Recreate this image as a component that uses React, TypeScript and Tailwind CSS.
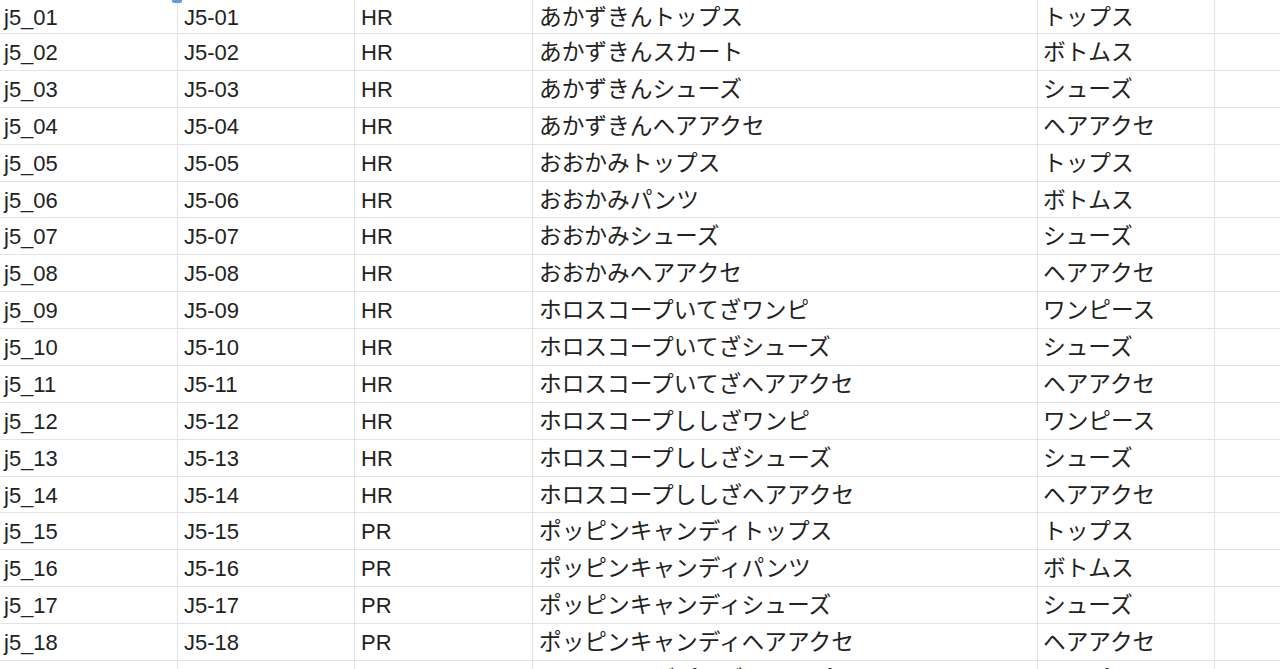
import React from "react";

type Row = { a: string; b: string; c: string; d: string; e: string; h: string };

const names: [string, string][] = [
  ["あかずきんトップス", "トップス"],
  ["あかずきんスカート", "ボトムス"],
  ["あかずきんシューズ", "シューズ"],
  ["あかずきんヘアアクセ", "ヘアアクセ"],
  ["おおかみトップス", "トップス"],
  ["おおかみパンツ", "ボトムス"],
  ["おおかみシューズ", "シューズ"],
  ["おおかみヘアアクセ", "ヘアアクセ"],
  ["ホロスコープいてざワンピ", "ワンピース"],
  ["ホロスコープいてざシューズ", "シューズ"],
  ["ホロスコープいてざヘアアクセ", "ヘアアクセ"],
  ["ホロスコープししざワンピ", "ワンピース"],
  ["ホロスコープししざシューズ", "シューズ"],
  ["ホロスコープししざヘアアクセ", "ヘアアクセ"],
  ["ポッピンキャンディトップス", "トップス"],
  ["ポッピンキャンディパンツ", "ボトムス"],
  ["ポッピンキャンディシューズ", "シューズ"],
  ["ポッピンキャンディヘアアクセ", "ヘアアクセ"],
  ["ドリーミングプリズムワンピース", "ワンピース"],
];

const heights = [
  "h-[34px]",
  "h-[37px]",
  "h-[37px]",
  "h-[37px]",
  "h-[37px]",
  "h-[36px]",
  "h-[37px]",
  "h-[37px]",
  "h-[37px]",
  "h-[37px]",
  "h-[37px]",
  "h-[37px]",
  "h-[37px]",
  "h-[36px]",
  "h-[37px]",
  "h-[37px]",
  "h-[37px]",
  "h-[37px]",
  "h-[37px]",
];

const rows: Row[] = names.map(([d, e], i) => {
  const n = String(i + 1).padStart(2, "0");
  const last = i === names.length - 1;
  return {
    a: last ? "" : `j5_${n}`,
    b: last ? "" : `J5-${n}`,
    c: last ? "" : i < 14 ? "HR" : "PR",
    d,
    e,
    h: heights[i],
  };
});

export default function App() {
  return (
    <div className="relative w-[1280px] h-[669px] overflow-hidden bg-white text-[#222] font-['Liberation_Sans','Noto_Sans_CJK_JP',sans-serif] text-[22px] leading-none">
      <div className="flex flex-col">
        {rows.map((r, i) => (
          <div
            key={i}
            className={`grid grid-cols-[178px_177px_178px_505px_177px_1fr] shrink-0 border-b border-[#e2e2e2] ${r.h}`}
          >
            <div className="flex items-center border-r border-[#e2e2e2] pl-[4px] pt-[2px] whitespace-nowrap">{r.a}</div>
            <div className="flex items-center border-r border-[#e2e2e2] pl-[6px] pt-[2px] whitespace-nowrap">{r.b}</div>
            <div className="flex items-center border-r border-[#e2e2e2] pl-[6px] pt-[2px] whitespace-nowrap">{r.c}</div>
            <div className="flex items-center border-r border-[#e2e2e2] pl-[6px] pb-[1px] whitespace-nowrap font-['Noto_Sans_CJK_JP',sans-serif] text-[22.7px]">{r.d}</div>
            <div className="flex items-center border-r border-[#e2e2e2] pl-[5px] pb-[1px] whitespace-nowrap font-['Noto_Sans_CJK_JP',sans-serif] text-[22.7px]">{r.e}</div>
            <div />
          </div>
        ))}
      </div>
      <div className="absolute left-[172px] top-0 w-[10px] h-[3px] rounded-b-[2px] bg-[#5b9be6]" />
    </div>
  );
}
